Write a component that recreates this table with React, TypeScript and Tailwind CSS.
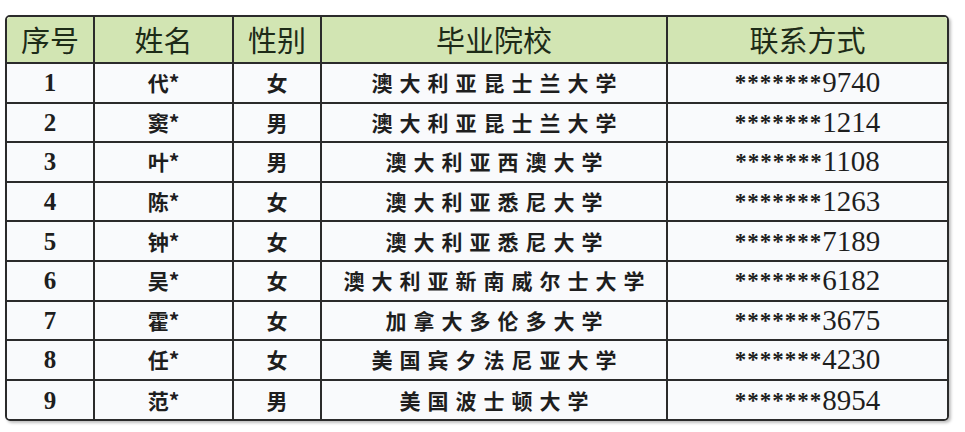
const rows = [
  { id: 1, name: "代*", gender: "女", school: "澳大利亚昆士兰大学", phone: "9740" },
  { id: 2, name: "窦*", gender: "男", school: "澳大利亚昆士兰大学", phone: "1214" },
  { id: 3, name: "叶*", gender: "男", school: "澳大利亚西澳大学", phone: "1108" },
  { id: 4, name: "陈*", gender: "女", school: "澳大利亚悉尼大学", phone: "1263" },
  { id: 5, name: "钟*", gender: "女", school: "澳大利亚悉尼大学", phone: "7189" },
  { id: 6, name: "吴*", gender: "女", school: "澳大利亚新南威尔士大学", phone: "6182" },
  { id: 7, name: "霍*", gender: "女", school: "加拿大多伦多大学", phone: "3675" },
  { id: 8, name: "任*", gender: "女", school: "美国宾夕法尼亚大学", phone: "4230" },
  { id: 9, name: "范*", gender: "男", school: "美国波士顿大学", phone: "8954" },
];

const cjk = "font-['Noto_Sans_CJK_SC',sans-serif]";
const serif = "font-['Liberation_Serif','Noto_Sans_CJK_SC',serif]";

const App = () => {
  return (
    <div className="w-[965px] h-[432px] bg-white pl-[5px] pt-[15px]">
      <div className="w-[944px] rounded-[5px] border-2 border-[#2b2b2b] overflow-hidden shadow-[2px_2px_3px_rgba(0,0,0,0.25)]">
        <table className="w-full border-collapse table-fixed bg-[#f9fafc] text-[#1e1e1e]">
          <colgroup>
            <col className="w-[87px]" />
            <col className="w-[139px]" />
            <col className="w-[88px]" />
            <col className="w-[346px]" />
            <col />
          </colgroup>
          <thead>
            <tr className="h-[46px] bg-[#d2e5b3] text-[#1d2b18]">
              {["序号", "姓名", "性别", "毕业院校", "联系方式"].map((h, i) => (
                <th
                  key={h}
                  className={`${cjk} font-normal text-[29px] leading-none border-b-2 border-[#2b2b2b] ${i < 4 ? "border-r-2" : ""}`}
                >
                  {h}
                </th>
              ))}
            </tr>
          </thead>
          <tbody>
            {rows.map((r, idx) => {
              const last = idx === rows.length - 1;
              const cell = `border-[#2b2b2b] ${last ? "" : "border-b-2"}`;
              return (
                <tr key={r.id} className="h-[39.6px] text-center">
                  <td className={`${serif} font-bold text-[25px] leading-none border-r-2 ${cell}`}>{r.id}</td>
                  <td className={`${cjk} font-semibold text-[21px] leading-none border-r-2 ${cell}`}>
                    {r.name}
                  </td>
                  <td className={`${cjk} font-semibold text-[21px] leading-none border-r-2 ${cell}`}>
                    {r.gender}
                  </td>
                  <td className={`${cjk} font-semibold text-[21px] leading-none tracking-[7px] border-r-2 ${cell}`}>
                    <span className="mr-[-7px]">{r.school}</span>
                  </td>
                  <td className={`${serif} leading-none ${cell}`}>
                    <span className="text-[23px] font-bold tracking-[1px] align-[2px]">*******</span>
                    <span className="text-[29px]">{r.phone}</span>
                  </td>
                </tr>
              );
            })}
          </tbody>
        </table>
      </div>
    </div>
  );
};

export default App;
